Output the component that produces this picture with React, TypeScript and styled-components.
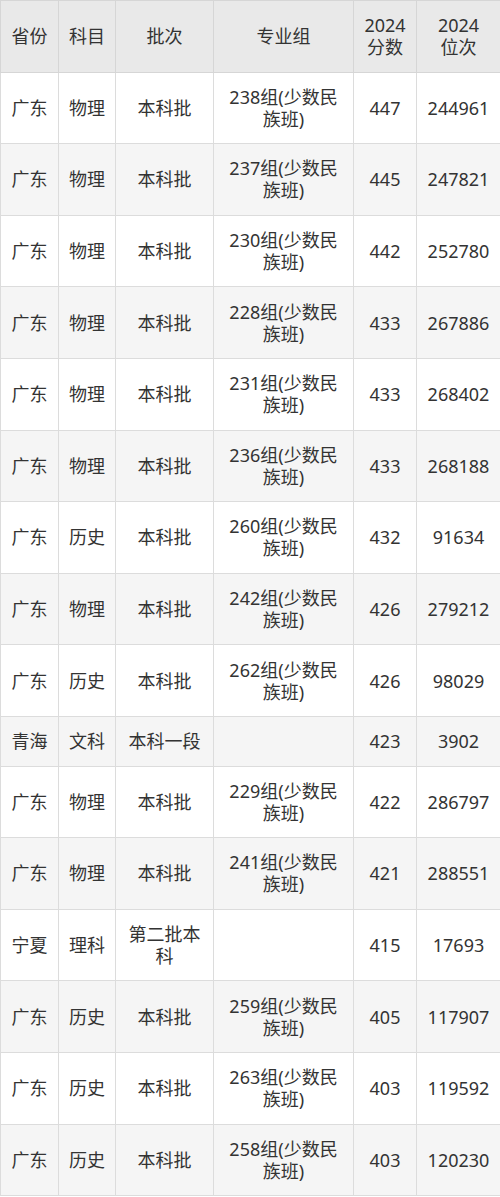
import { createGlobalStyle, styled } from 'styled-components';

type Row = {
  province: string;
  subject: string;
  batch: string;
  group: string;
  score: string;
  rank: string;
};

const rows: Row[] = [
  { province: '广东', subject: '物理', batch: '本科批', group: '238组(少数民族班)', score: '447', rank: '244961' },
  { province: '广东', subject: '物理', batch: '本科批', group: '237组(少数民族班)', score: '445', rank: '247821' },
  { province: '广东', subject: '物理', batch: '本科批', group: '230组(少数民族班)', score: '442', rank: '252780' },
  { province: '广东', subject: '物理', batch: '本科批', group: '228组(少数民族班)', score: '433', rank: '267886' },
  { province: '广东', subject: '物理', batch: '本科批', group: '231组(少数民族班)', score: '433', rank: '268402' },
  { province: '广东', subject: '物理', batch: '本科批', group: '236组(少数民族班)', score: '433', rank: '268188' },
  { province: '广东', subject: '历史', batch: '本科批', group: '260组(少数民族班)', score: '432', rank: '91634' },
  { province: '广东', subject: '物理', batch: '本科批', group: '242组(少数民族班)', score: '426', rank: '279212' },
  { province: '广东', subject: '历史', batch: '本科批', group: '262组(少数民族班)', score: '426', rank: '98029' },
  { province: '青海', subject: '文科', batch: '本科一段', group: '', score: '423', rank: '3902' },
  { province: '广东', subject: '物理', batch: '本科批', group: '229组(少数民族班)', score: '422', rank: '286797' },
  { province: '广东', subject: '物理', batch: '本科批', group: '241组(少数民族班)', score: '421', rank: '288551' },
  { province: '宁夏', subject: '理科', batch: '第二批本科', group: '', score: '415', rank: '17693' },
  { province: '广东', subject: '历史', batch: '本科批', group: '259组(少数民族班)', score: '405', rank: '117907' },
  { province: '广东', subject: '历史', batch: '本科批', group: '263组(少数民族班)', score: '403', rank: '119592' },
  { province: '广东', subject: '历史', batch: '本科批', group: '258组(少数民族班)', score: '403', rank: '120230' },
];

export default function App() {
  return (
    <>
      <GlobalStyle />
      <St.Table>
        <colgroup>
          <col style={{ width: 58 }} />
          <col style={{ width: 57 }} />
          <col style={{ width: 98 }} />
          <col style={{ width: 140 }} />
          <col style={{ width: 63 }} />
          <col style={{ width: 84 }} />
        </colgroup>
        <thead>
          <tr>
            <St.Head>省份</St.Head>
            <St.Head>科目</St.Head>
            <St.Head>批次</St.Head>
            <St.Head>专业组</St.Head>
            <St.Head>
              <St.HeadLine>2024</St.HeadLine>
              <St.HeadLine>分数</St.HeadLine>
            </St.Head>
            <St.Head>
              <St.HeadLine>2024</St.HeadLine>
              <St.HeadLine>位次</St.HeadLine>
            </St.Head>
          </tr>
        </thead>
        <tbody>
          {rows.map((r, i) => (
            <St.Row key={i} $striped={i % 2 === 1}>
              <St.Cell>{r.province}</St.Cell>
              <St.Cell>{r.subject}</St.Cell>
              <St.Cell>{r.batch}</St.Cell>
              <St.Cell>{r.group}</St.Cell>
              <St.Cell>{r.score}</St.Cell>
              <St.Cell>{r.rank}</St.Cell>
            </St.Row>
          ))}
        </tbody>
      </St.Table>
    </>
  );
}

const GlobalStyle = createGlobalStyle`
  body {
    margin: 0;
    background: #ffffff;
    font-family: 'Noto Sans', 'Noto Sans CJK SC', sans-serif;
    color: #333333;
  }
`;

const St = {
  Table: styled.table`
    width: 500px;
    table-layout: fixed;
    border-collapse: collapse;
    font-size: 18px;
    line-height: 22px;
  `,

  Head: styled.th`
    background-color: #e9e9e9;
    border: 1px solid #d6d6d6;
    padding: 13.3px 9px;
    font-weight: 400;
    text-align: center;
  `,

  HeadLine: styled.span`
    display: block;
  `,

  Row: styled.tr<{ $striped: boolean }>`
    background-color: ${({ $striped }) => ($striped ? '#f5f5f5' : '#ffffff')};
  `,

  Cell: styled.td`
    border: 1px solid #dcdcdc;
    padding: 13.3px 9px;
    text-align: center;
  `,
};
